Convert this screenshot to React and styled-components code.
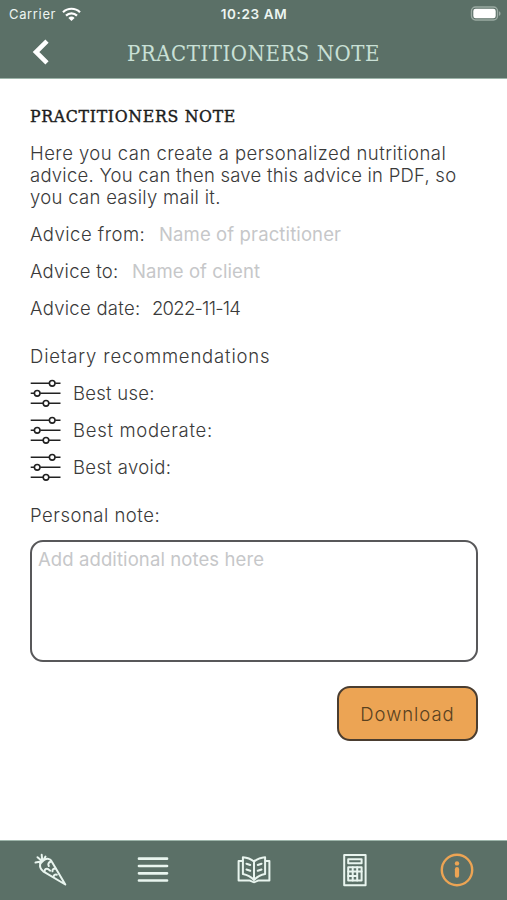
import React from "react";
import styled, { createGlobalStyle } from "styled-components";

const GlobalStyle = createGlobalStyle`
  * { box-sizing: border-box; }
  body { margin: 0; background: #fff; }
`;

const green = "#5b7067";
const mint = "#c9e0d6";
const orange = "#eca454";

const Screen = styled.div`
  display: flex;
  flex-direction: column;
  width: 507px;
  height: 900px;
  overflow: hidden;
  background: #fff;
  color: #3a3a3a;
  font-family: Inter, "Liberation Sans", sans-serif;
`;

const Header = styled.header`
  flex: none;
  height: 79px;
  background: ${green};
  border-bottom: 1px solid #9db5aa;
`;

const StatusBar = styled.div`
  display: grid;
  grid-template-columns: 1fr auto 1fr;
  align-items: center;
  height: 28px;
  padding: 0 8px 0 9px;
  color: #edf5f1;
  font-size: 13px;
`;

const Carrier = styled.div`
  display: flex;
  align-items: center;
  gap: 6px;
  letter-spacing: 0.65px;
`;

const Clock = styled.div`
  font-weight: 600;
  font-size: 13.5px;
  letter-spacing: 0.6px;
`;

const Battery = styled.div`
  display: flex;
  justify-content: flex-end;
  margin: -2px -2px 0 0;
`;

const TitleBar = styled.div`
  display: grid;
  grid-template-columns: 127px 254px 1fr;
  align-items: center;
  height: 50px;
`;

const BackButton = styled.button`
  display: flex;
  width: 30px;
  margin: -2px 0 0 25px;
  padding: 0;
  border: 0;
  background: none;
`;

const Title = styled.h1`
  margin: 2px 0 0;
  color: ${mint};
  font: 400 22px/30px "DejaVu Serif Condensed", "DejaVu Serif", serif;
  letter-spacing: 0.52px;
  white-space: nowrap;
`;

const Content = styled.main`
  flex: 1;
  display: flex;
  flex-direction: column;
  padding: 26px 29px 0 30px;
`;

const SectionTitle = styled.h2`
  margin: 0 0 14px;
  color: #1c1c1c;
  font: 400 17.5px/23px "DejaVu Serif Condensed", "DejaVu Serif", serif;
  letter-spacing: 0.68px;
  -webkit-text-stroke: 0.4px #1c1c1c;
`;

const Text = styled.span`
  display: block;
  font-weight: 300;
  font-size: 18.5px;
  line-height: 22.3px;
  letter-spacing: ${(p) => p.$tracking || 0}px;
  white-space: nowrap;
`;

const Intro = styled.div`
  margin: -0.5px 0 7.5px;
`;

const Field = styled.label`
  display: flex;
  align-items: center;
  height: 37px;
`;

const FieldLabel = styled(Text)`
  flex: none;
  width: ${(p) => p.$width}px;
`;

const Input = styled.input`
  width: 260px;
  padding: 0;
  border: 0;
  outline: 0;
  background: none;
  color: #3a3a3a;
  font: 300 18.5px/22px Inter, "Liberation Sans", sans-serif;
  letter-spacing: ${(p) => p.$tracking || 0}px;
  &::placeholder { color: #c6c7c9; font-weight: 400; opacity: 1; }
`;

const Recommendations = styled.section`
  margin-top: 11px;
`;

const Option = styled.div`
  display: flex;
  align-items: center;
  gap: 12px;
  height: 37px;
`;

const NoteLabel = styled.div`
  display: flex;
  align-items: center;
  height: 37px;
  margin-top: 11px;
`;

const NoteArea = styled.textarea`
  display: block;
  width: 448px;
  height: 122px;
  margin-top: 6px;
  padding: 5px 6px;
  border: 2px solid #58585a;
  border-radius: 13px;
  outline: 0;
  resize: none;
  font: 400 18.5px/24px Inter, "Liberation Sans", sans-serif;
  letter-spacing: ${(p) => p.$tracking}px;
  &::placeholder { color: #c6c7c9; opacity: 1; }
`;

const DownloadButton = styled.button`
  display: flex;
  align-items: center;
  justify-content: center;
  align-self: flex-end;
  width: 141px;
  height: 55px;
  margin-top: 24px;
  padding: 1px 0 0;
  border: 2px solid #4a3d30;
  border-radius: 13px;
  background: ${orange};
  color: #59411f;
  font-family: inherit;
`;

const TabBar = styled.nav`
  flex: none;
  display: grid;
  grid-template-columns: repeat(5, 1fr);
  height: 60px;
  border-top: 1px solid #9db5aa;
  background: ${green};
`;

const Tab = styled.button`
  display: flex;
  align-items: center;
  justify-content: center;
  padding: 0 0 3px 1px;
  border: 0;
  background: none;
  color: ${(p) => (p.$active ? orange : "#e9f5ef")};
`;

const Glyph = ({ children, sw = 2 }) => (
  <svg width="36" height="36" viewBox="0 0 36 36" fill="none" stroke="currentColor"
    strokeWidth={sw} strokeLinecap="round" strokeLinejoin="round">{children}</svg>
);

const WifiIcon = () => (
  <svg width="19" height="15" viewBox="0 0 19 15" fill="none" stroke="#fff" strokeWidth="2.2">
    <path d="M1 5.2a12.2 12.2 0 0 1 17 0M4 8.6a7.9 7.9 0 0 1 11 0" />
    <path d="M9.5 14 6.4 10.9a4.4 4.4 0 0 1 6.2 0Z" fill="#fff" stroke="none" />
  </svg>
);

const BatteryIcon = () => (
  <svg width="31" height="15" viewBox="0 0 31 15" fill="none">
    <rect x="1.5" y="1" width="26" height="13" rx="4" stroke="#9baaa3" strokeWidth="1.4" />
    <rect x="3.3" y="2.8" width="22.4" height="9.4" rx="2.3" fill="#fff" />
    <path d="M29 5.2c2 .8 2 3.8 0 4.6Z" fill="#9baaa3" />
  </svg>
);

const BackIcon = () => (
  <svg width="30" height="30" viewBox="0 0 30 30" fill="none" stroke="#fff" strokeWidth="4.6">
    <path d="M22 4.2 11 15l11 10.8" />
  </svg>
);

const SlidersIcon = () => (
  <svg width="31" height="28" viewBox="0 0 31 28" fill="none" stroke="#222" strokeWidth="1.6">
    <path d="M.7 4.300H19.2M25.2 4.300H30.5M.7 14.300H4.2M10.2 14.300H30.5M.7 24.300H13M19 24.300H30.5" />
    <circle cx="22.2" cy="4.300" r="2.8" />
    <circle cx="7.2" cy="14.300" r="2.8" />
    <circle cx="16" cy="24.300" r="2.8" />
  </svg>
);

const CarrotIcon = () => (
  <Glyph sw={2}>
    <path d="M7.300 12.500C6.500 15.500 7.700 18.300 10.200 20.300L32.300 33.500 18.700 10.500C17.300 7.600 14 7.300 11.500 8.500" />
    <path d="M7.300 12.500 11.500 8.500M9.300 10.300 8.700 3.800M9.300 10.300 4.500 6.200M9.300 10.300 2.500 11.500M10.500 9 12.500 5.500" />
    <path d="M17.800 10.500q-3.600 1.500-2 4.500M11.500 20.500q.3-3.500 3.500-2.500l2.200 1.700M22.500 17.500q-3.300.2-3 2.800M20.500 25.800q.5-2.800 3.300-2.100" />
  </Glyph>
);

const ListIcon = () => (
  <Glyph sw={2.7}><path d="M4 7.7h28M4 15h28M4 22.300h28M4 29.500h28" /></Glyph>
);

const BookIcon = () => (
  <Glyph sw={2}>
    <path d="M18 10.500v18.500C14.500 25.300 11 23.800 6.900 23V6.200C11.500 6.500 15 8 18 10.500 21 8 24.500 6.500 29.100 6.200V23C25 23.800 21.500 25.300 18 29" />
    <path d="M6.500 10H2.600V29.500H13.500c1.500 0 2.500 1.700 4.500 1.700s3-1.700 4.500-1.700h10.900V10H29.500" />
    <path d="M10.500 12.700l3.700 1.300M10.500 18.500l3.700 1.300M25.500 12.700l-3.700 1.300M25.500 18.500l-3.700 1.300" />
  </Glyph>
);

const CalculatorIcon = () => (
  <Glyph sw={2}>
    <rect x="7.200" y="4" width="21.400" height="30.200" />
    <rect x="11.200" y="8.200" width="13.400" height="4" />
    <rect x="11.200" y="16.200" width="13.400" height="13.400" />
    <path d="M11.200 20.600h13.400M11.200 25.100h9M15.700 16.200v13.400M20.200 16.200v13.400" />
  </Glyph>
);

const InfoIcon = () => (
  <Glyph sw={2.4}>
    <circle cx="18" cy="19" r="15.200" />
    <circle cx="18" cy="12.400" r="2.200" fill="currentColor" stroke="none" />
    <path d="M18 18.200v6.500" strokeWidth="4.200" />
  </Glyph>
);

const intro = [
  ["Here you can create a personalized nutritional", 0.46],
  ["advice. You can then save this advice in PDF, so", 0.24],
  ["you can easily mail it.", 0.3],
];

const options = [
  ["Best use:", 0.25],
  ["Best moderate:", 0.7],
  ["Best avoid:", 0.35],
];

const tabs = [CarrotIcon, ListIcon, BookIcon, CalculatorIcon, InfoIcon];

export default function App() {
  return (
    <Screen>
      <GlobalStyle />
      <Header>
        <StatusBar>
          <Carrier>Carrier <WifiIcon /></Carrier>
          <Clock>10:23 AM</Clock>
          <Battery><BatteryIcon /></Battery>
        </StatusBar>
        <TitleBar>
          <BackButton aria-label="Back"><BackIcon /></BackButton>
          <Title>PRACTITIONERS NOTE</Title>
        </TitleBar>
      </Header>
      <Content>
        <SectionTitle>PRACTITIONERS NOTE</SectionTitle>
        <Intro>
          {intro.map(([line, tracking]) => <Text key={line} $tracking={tracking}>{line}</Text>)}
        </Intro>
        <Field>
          <FieldLabel $width={129} $tracking={0.48}>Advice from:</FieldLabel>
          <Input placeholder="Name of practitioner" $tracking={0.12} />
        </Field>
        <Field>
          <FieldLabel $width={102} $tracking={0.25}>Advice to:</FieldLabel>
          <Input placeholder="Name of client" $tracking={0.08} />
        </Field>
        <Field>
          <FieldLabel $width={122} $tracking={0.28}>Advice date:</FieldLabel>
          <Input defaultValue="2022-11-14" $tracking={-0.75} />
        </Field>
        <Recommendations>
          <Option><Text $tracking={0.83}>Dietary recommendations</Text></Option>
          {options.map(([label, tracking]) => (
            <Option key={label}><SlidersIcon /><Text $tracking={tracking}>{label}</Text></Option>
          ))}
        </Recommendations>
        <NoteLabel><Text $tracking={0.5}>Personal note:</Text></NoteLabel>
        <NoteArea placeholder="Add additional notes here" $tracking={0.1} />
        <DownloadButton><Text $tracking={0.95}>Download</Text></DownloadButton>
      </Content>
      <TabBar>
        {tabs.map((Icon, i) => <Tab key={i} $active={i === 4}><Icon /></Tab>)}
      </TabBar>
    </Screen>
  );
}
